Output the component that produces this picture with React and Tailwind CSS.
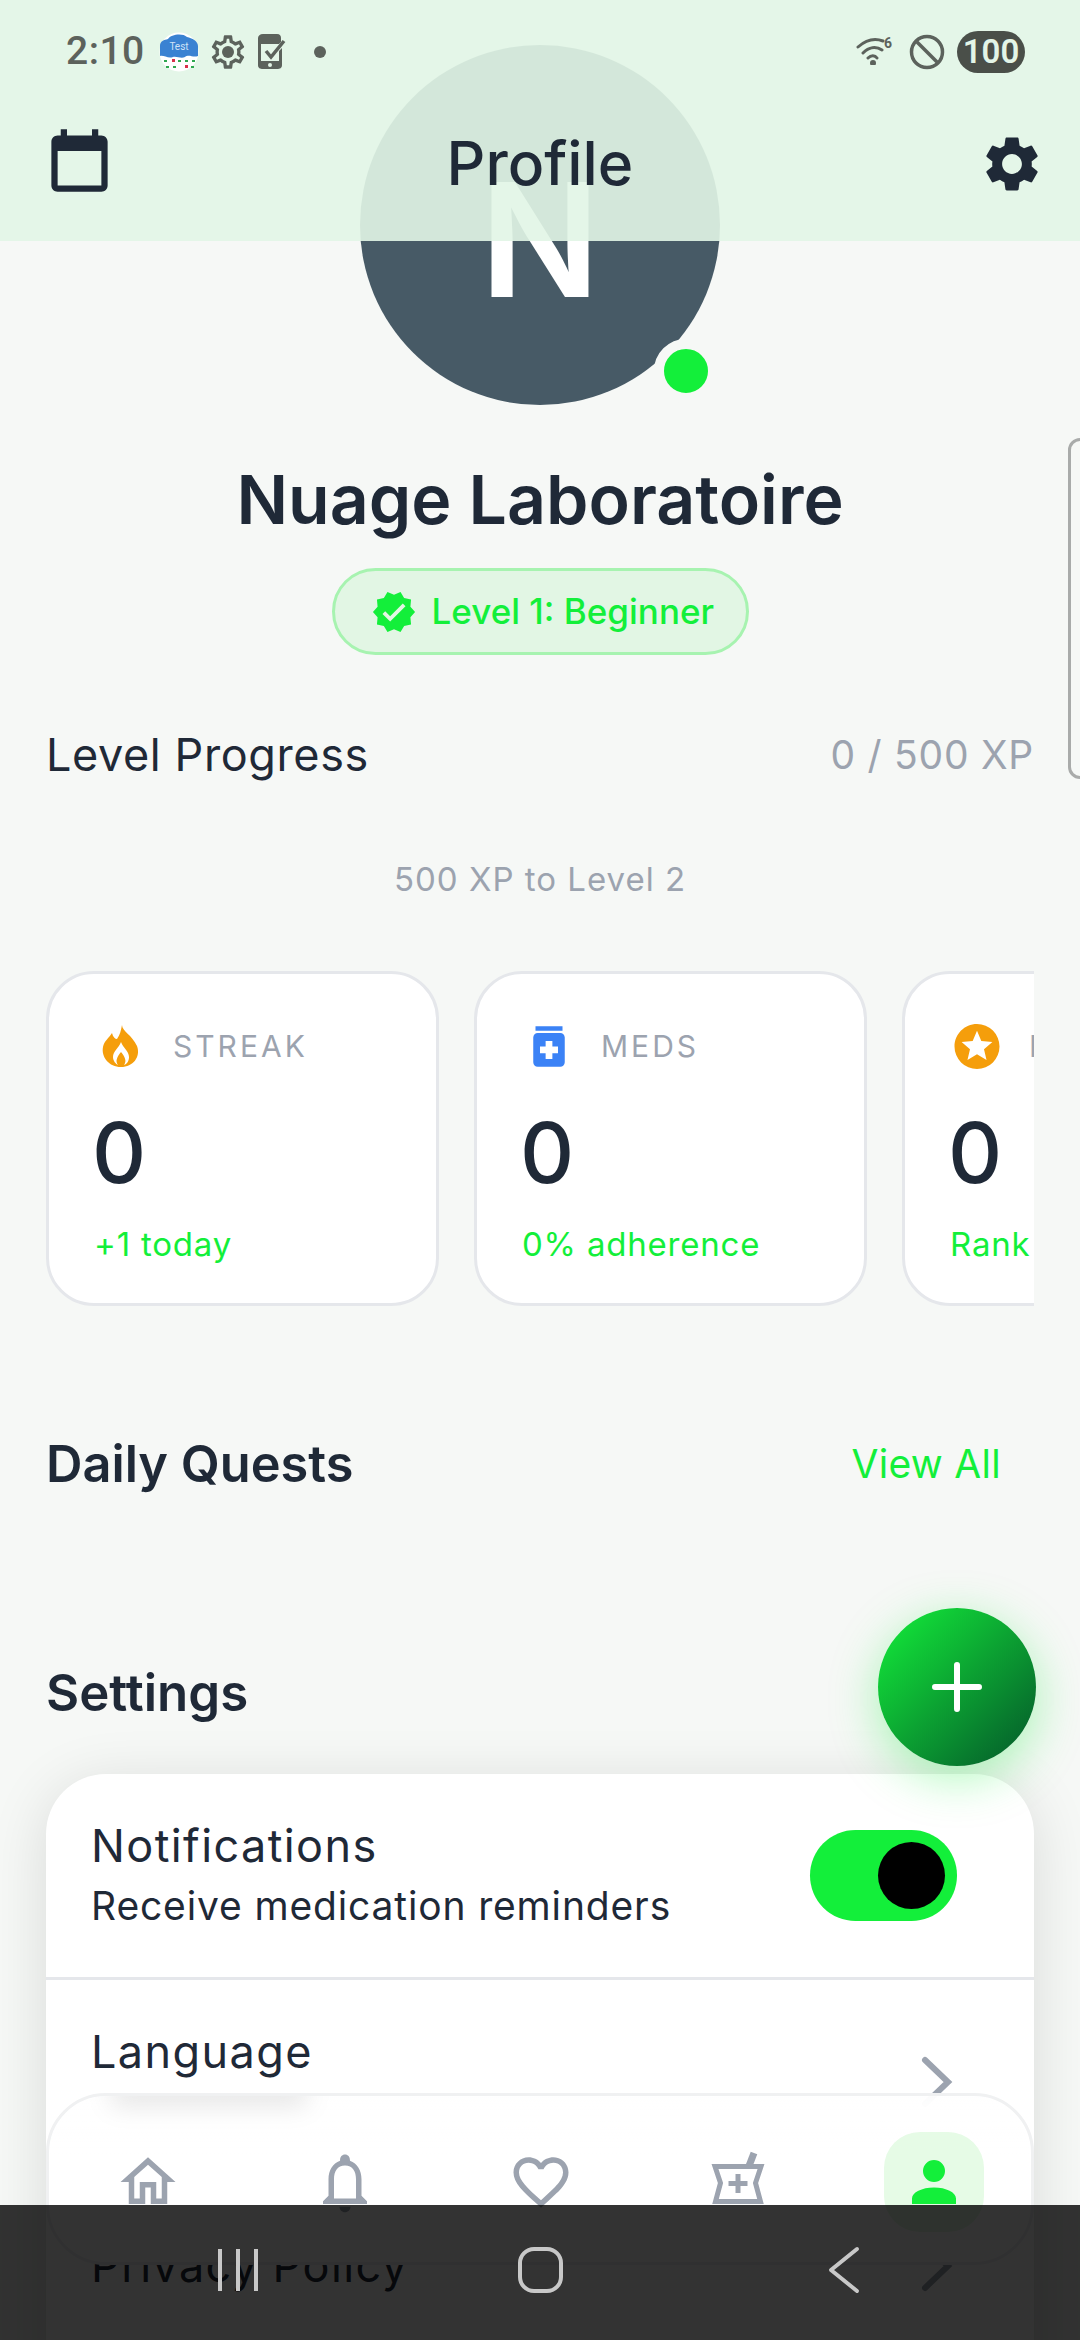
const G = '#13ef3a';
const Ic = ({ d, size = 66, color = '#9ca3af', className = '' }) => (
  <svg width={size} height={size} viewBox="0 0 24 24" fill={color} className={className}><path d={d} /></svg>
);
const home = 'M12 5.69L17 10.19V18H15V12H9V18H7V10.19L12 5.69M12 3L2 12H5V20H11V14H13V20H19V12H22L12 3Z';
const bell = 'M10 21H14C14 22.1 13.1 23 12 23S10 22.1 10 21M20 19V20H4V19L6 17V11C6 7.9 7.5 5.2 10.2 4.3V4C10.2 2.9 10.9 2 12 2S13.8 2.9 13.8 4V4.3C16.5 5.2 18 7.9 18 11V17L20 19M16 11C16 8.2 14.8 6 12 6S8 8.2 8 11V18H16V11Z';
const heart = 'M12.1,18.55L12,18.65L11.89,18.55C7.14,14.24 4,11.39 4,8.5C4,6.5 5.5,5 7.5,5C9.04,5 10.54,6 11.07,7.36H12.93C13.46,6 14.96,5 16.5,5C18.5,5 20,6.5 20,8.5C20,11.39 16.86,14.24 12.1,18.55M16.5,3C14.76,3 13.09,3.81 12,5.08C10.91,3.81 9.24,3 7.5,3C4.42,3 2,5.41 2,8.5C2,12.27 5.4,15.36 10.55,20.03L12,21.35L13.45,20.03C18.6,15.36 22,12.27 22,8.5C22,5.41 19.58,3 16.5,3Z';
const account = 'M12,4A4,4 0 0,1 16,8A4,4 0 0,1 12,12A4,4 0 0,1 8,8A4,4 0 0,1 12,4M12,14C16.42,14 20,15.79 20,18V20H4V18C4,15.79 7.58,14 12,14Z';
const calendar = 'M19 3H18V1H16V3H8V1H6V3H5C3.89 3 3 3.9 3 5V19C3 20.1 3.89 21 5 21H19C20.1 21 21 20.1 21 19V5C21 3.9 20.1 3 19 3M19 19H5V8H19V19Z';
const gear = 'M19.14 12.94c.04-.3.06-.61.06-.94 0-.32-.02-.64-.07-.94l2.03-1.58c.18-.14.23-.41.12-.61l-1.92-3.32c-.12-.22-.37-.29-.59-.22l-2.39.96c-.5-.38-1.03-.7-1.62-.94l-.36-2.54c-.04-.24-.24-.41-.48-.41h-3.84c-.24 0-.43.17-.47.41l-.36 2.54c-.59.24-1.13.57-1.62.94l-2.39-.96c-.22-.08-.47 0-.59.22L2.74 8.87c-.12.21-.08.47.12.61l2.03 1.58c-.05.3-.09.63-.09.94s.02.64.07.94l-2.03 1.58c-.18.14-.23.41-.12.61l1.92 3.32c.12.22.37.29.59.22l2.39-.96c.5.38 1.03.7 1.62.94l.36 2.54c.05.24.24.41.48.41h3.84c.24 0 .44-.17.47-.41l.36-2.54c.59-.24 1.13-.56 1.62-.94l2.39.96c.22.08.47 0 .59-.22l1.92-3.32c.12-.22.07-.47-.12-.61l-2.01-1.58zM12 15.6c-1.98 0-3.6-1.62-3.6-3.6s1.62-3.6 3.6-3.6 3.6 1.62 3.6 3.6-1.62 3.6-3.6 3.6z';
const gearOutline = 'M19.43 12.98c.04-.32.07-.64.07-.98 0-.34-.03-.66-.07-.98l2.11-1.65c.19-.15.24-.42.12-.64l-2-3.46c-.09-.16-.26-.25-.44-.25-.06 0-.12.01-.17.03l-2.49 1c-.52-.4-1.08-.73-1.69-.98l-.38-2.65C14.46 2.18 14.25 2 14 2h-4c-.25 0-.46.18-.49.42l-.38 2.65c-.61.25-1.17.59-1.69.98l-2.49-1c-.06-.02-.12-.03-.18-.03-.17 0-.34.09-.43.25l-2 3.46c-.13.22-.07.49.12.64l2.11 1.65c-.04.32-.07.65-.07.98 0 .33.03.66.07.98l-2.11 1.65c-.19.15-.24.42-.12.64l2 3.46c.09.16.26.25.44.25.06 0 .12-.01.17-.03l2.49-1c.52.4 1.08.73 1.69.98l.38 2.65c.03.24.24.42.49.42h4c.25 0 .46-.18.49-.42l.38-2.65c.61-.25 1.17-.59 1.69-.98l2.49 1c.06.02.12.03.18.03.17 0 .34-.09.43-.25l2-3.46c.12-.22.07-.49-.12-.64l-2.11-1.65zm-1.98-1.71c.04.31.05.52.05.73 0 .21-.02.43-.05.73l-.14 1.13.89.7 1.08.84-.7 1.21-1.27-.51-1.04-.42-.9.68c-.43.32-.84.56-1.25.73l-1.06.43-.16 1.13-.2 1.35h-1.4l-.19-1.35-.16-1.13-1.06-.43c-.43-.18-.83-.41-1.23-.71l-.91-.7-1.06.43-1.27.51-.7-1.21 1.08-.84.89-.7-.14-1.13c-.03-.31-.05-.54-.05-.74s.02-.43.05-.73l.14-1.13-.89-.7-1.08-.84.7-1.21 1.27.51 1.04.42.9-.68c.43-.32.84-.56 1.25-.73l1.06-.43.16-1.13.2-1.35h1.39l.19 1.35.16 1.13 1.06.43c.43.18.83.41 1.23.71l.91.7 1.06-.43 1.27-.51.7 1.21-1.07.85-.89.7.14 1.13z';
const decagram = 'M23,12L20.56,9.22L20.9,5.54L17.29,4.72L15.4,1.54L12,3L8.6,1.54L6.71,4.72L3.1,5.53L3.44,9.21L1,12L3.44,14.78L3.1,18.47L6.71,19.29L8.6,22.47L12,21L15.4,22.46L17.29,19.28L20.9,18.46L20.56,14.78L23,12M10,17L6,13L7.41,11.59L10,14.17L16.59,7.58L18,9L10,17Z';
const meds = 'M6 3h12v2H6V3zM17 6H7c-1.1 0-2 .9-2 2v11c0 1.1.9 2 2 2h10c1.1 0 2-.9 2-2V8c0-1.1-.9-2-2-2zm-1 9h-2.5v2.5h-3V15H8v-3h2.5V9.5h3V12H16v3z';
const starCircle = 'M16.23,18L12,15.45L7.77,18L8.89,13.19L5.16,9.96L10.08,9.54L12,5L13.92,9.53L18.84,9.95L15.11,13.18L16.23,18M12,2C6.47,2 2,6.5 2,12A10,10 0 0,0 12,22A10,10 0 0,0 22,12A10,10 0 0,0 12,2Z';

const Flame = () => (
  <svg width="54" height="54" viewBox="0 0 54 54" fill="#f59e0b">
    <path fillRule="evenodd" d="M28 6C28 12 38 16 43 27C47 38 39 48 27 48C15 48 7 38 9 28C10 22 15 19 18 14C19 18 21 20 23 20C26 16 27 11 28 6ZM27 23C25 29 19 32 19 38C19 42 22 45 24 46C21 42 23 38 27 33C31 38 33 42 30 46C33 45 35 42 35 38C35 32 29 29 27 23Z" />
  </svg>
);

const Mortar = () => (
  <svg width="66" height="66" viewBox="0 0 66 66" fill="none" stroke="#9ca3af" strokeWidth="5">
    <path d="M10 17.5H56L50.5 34L55.5 52.5H10.5L15.5 34Z" />
    <path d="M44 17L49 4" strokeWidth="7" />
    <path d="M33 25V44M23.5 34.5H42.5" />
  </svg>
);

const Chevron = () => (
  <svg width="36" height="54" viewBox="0 0 36 54" fill="none" stroke="#9ca3af" strokeWidth="6" strokeLinecap="round">
    <path d="M6 5L29 27L6 49" />
  </svg>
);

const TestCloud = () => (
  <svg width="40" height="40" viewBox="0 0 40 40">
    <circle cx="20" cy="20" r="19.5" fill="#fff" />
    <path d="M1 24V14C1 9 5 8 9 7C12 2 24 1 28 5C33 6 39 9 39 14V24C34 26 30 22 26 25C22 27 18 24 14 25C9 27 5 23 1 24Z" fill="#3a82d2" />
    <text x="20" y="18" textAnchor="middle" fontSize="10" fontFamily="Roboto, sans-serif" fill="#cfe2f7">Test</text>
    <g fill="#2fa84f">
      <rect x="5" y="28" width="3" height="2" /><rect x="19" y="28" width="3" height="2" /><rect x="26" y="28" width="3" height="2" /><rect x="33" y="28" width="3" height="2" />
      <rect x="7" y="34" width="3" height="2" /><rect x="14" y="34" width="3" height="2" /><rect x="32" y="34" width="3" height="2" />
    </g>
    <g fill="#d9304a">
      <rect x="13" y="27" width="3" height="3" /><rect x="26" y="33" width="3" height="3" />
    </g>
  </svg>
);

const StatusBar = () => (
  <div className="flex h-[103px] items-center justify-between pl-[66px] pr-[55px]">
    <div className="flex items-center">
      <span className="text-[39px] font-medium text-[#5c625c] tracking-[0.5px]" style={{ fontFamily: 'Roboto, sans-serif' }}>2:10</span>
      <span className="ml-[14px] flex"><TestCloud /></span>
      <span className="ml-[9px] flex">
        <svg width="40" height="40" viewBox="0 0 24 24" fill="#5c625c"><path d={gearOutline} /><circle cx="12" cy="12" r="3.6" /></svg>
      </span>
      <span className="ml-[10px] flex">
        <svg width="32" height="36" viewBox="0 0 32 36" fill="none">
          <path d="M5 0H19C22 0 23 2 23 4V8L21 10H3V27H21V17L24 14V31C24 34 22 35 19 35H5C2 35 0 34 0 31V4C0 2 2 0 5 0Z" fill="#5c625c" />
          <circle cx="12" cy="31" r="2" fill="#e3f5e7" />
          <path d="M8 17L13 23L26 7" stroke="#5c625c" strokeWidth="3.5" />
        </svg>
      </span>
      <span className="ml-[24px] size-[12px] rounded-full bg-[#5c625c]" />
    </div>
    <div className="flex items-center">
      <svg width="38" height="30" viewBox="0 0 38 30" fill="none" stroke="#5c625c" strokeWidth="3" strokeLinecap="round" className="mt-[-4px]">
        <path d="M2 12C11 4 19 3 27 6M7 18C13 12 20 11 26 15M12 23C15 20 19 20 21 23" />
        <circle cx="17" cy="28" r="1.5" fill="#5c625c" />
        <text x="28" y="13" fontSize="14" fontWeight="700" fontFamily="Roboto, sans-serif" fill="#5c625c" stroke="none">6</text>
      </svg>
      <svg width="36" height="36" viewBox="0 0 36 36" fill="none" stroke="#5c625c" strokeWidth="3.5" className="ml-[15px]">
        <circle cx="18" cy="18" r="15.5" /><path d="M7 7L29 29" />
      </svg>
      <span className="ml-[12px] flex h-[42px] w-[68px] items-center justify-center rounded-full bg-[#4a4f49] text-[33px] font-semibold text-[#e3f5e7]" style={{ fontFamily: 'Roboto, sans-serif' }}>100</span>
    </div>
  </div>
);

const Stat = ({ icon, label, value, sub }) => (
  <div className="flex h-[335px] w-[393px] shrink-0 flex-col rounded-[48px] border-[3px] border-[#e5e7eb] bg-white pl-[45px] pt-[45px]">
    <div className="flex h-[54px] items-center">
      <span className="flex w-[54px] justify-center">{icon}</span>
      <span className="ml-[25px] text-[30px] tracking-[3px] text-[#9ca3af]">{label}</span>
    </div>
    <div className="mt-[25px] ml-[-2px] text-[84px] font-medium leading-[110px] text-[#1f2937]">{value}</div>
    <div className="mt-[12px] text-[33px] tracking-[0.8px] whitespace-nowrap text-[#13ef3a]">{sub}</div>
  </div>
);

const Row = ({ title, sub, spaced, h, right, border = true }) => (
  <div className={`flex items-center justify-between pl-[45px] pr-[79px] ${h} ${border ? 'border-b-[3px] border-[#e5e7eb]' : ''}`}>
    <div>
      <div className="text-[45px] leading-[60px] tracking-[1.4px] text-[#1f2937]">{title}</div>
      {sub && <div className="text-[39px] leading-[60px] tracking-[0.85px] text-[#1f2937]">{sub}</div>}
      {spaced && <div className="h-[60px]" />}
    </div>
    {right}
  </div>
);

export default function App() {
  return (
    <div className="relative h-[2340px] w-[1080px] overflow-hidden bg-[#f6f8f6]" style={{ fontFamily: 'Inter, sans-serif' }}>
      {/* scrolled content */}
      <div className="flex flex-col px-[46px] pt-[45px]">
        <div className="relative flex size-[360px] items-center justify-center self-center rounded-full bg-[#475a66]">
          <span className="mt-[30px] text-[158px] font-semibold leading-none text-white">N</span>
          <span className="absolute left-[294px] top-[294px] size-[64px] rounded-full border-[10px] border-[#f6f8f6] bg-[#13ef3a]" />
        </div>
        <h1 className="mt-[46px] text-center text-[68px] font-semibold leading-[96px] text-[#1f2937]">Nuage Laboratoire</h1>
        <div className="mt-[21px] flex h-[87px] w-[417px] items-center self-center rounded-full border-[3px] border-[#a7f3b0] bg-[#e2f6e4] pl-[36px]">
          <Ic d={decagram} size={46} color={G} />
          <span className="ml-[15px] text-[35px] font-medium text-[#13ef3a]">Level 1: Beginner</span>
        </div>
        <div className="mt-[70px] flex items-center justify-between">
          <span className="text-[45px] leading-[60px] tracking-[0.6px] text-[#1f2937]">Level Progress</span>
          <span className="text-[39px] tracking-[0.75px] text-[#9ca3af]">0 / 500 XP</span>
        </div>
        <div className="mt-[70px] text-center text-[33px] leading-[48px] tracking-[1px] text-[#9ca3af]">500 XP to Level 2</div>
        <div className="mt-[68px] flex gap-[35px] overflow-hidden">
          <Stat icon={<Flame />} label="STREAK" value="0" sub="+1 today" />
          <Stat icon={<Ic d={meds} size={57} color="#3b82f6" />} label="MEDS" value="0" sub="0% adherence" />
          <Stat icon={<Ic d={starCircle} size={55} color="#f59e0b" />} label="POINTS" value="0" sub="Rank #1" />
        </div>
        <div className="mt-[122px] flex items-center justify-between pr-[33px]">
          <span className="text-[50.5px] font-semibold leading-[72px] text-[#1f2937]">Daily Quests</span>
          <span className="text-[39px] tracking-[0.3px] text-[#13ef3a]">View All</span>
        </div>
        <div className="mt-[157px] text-[51px] font-semibold leading-[72px] text-[#1f2937]">Settings</div>
        <div className="mt-[45px] overflow-hidden rounded-[60px] bg-white shadow-[0_10px_60px_rgba(0,0,0,0.12)]">
          <Row
            h="h-[206px]"
            title="Notifications"
            sub="Receive medication reminders"
            right={
              <div className="mr-[-2px] flex h-[91px] w-[147px] items-center justify-end rounded-full bg-[#13ef3a] pr-[12px]">
                <span className="size-[67px] rounded-full bg-black" />
              </div>
            }
          />
          <Row h="h-[206px]" title="Language" spaced right={<Chevron />} />
          <Row h="h-[160px]" title="Privacy Policy" border={false} right={<Chevron />} />
          <div className="h-[200px]" />
        </div>
      </div>

      {/* fixed header */}
      <header className="absolute inset-x-0 top-0 h-[241px] bg-[rgba(225,245,230,0.91)]">
        <StatusBar />
        <div className="mt-[23px] grid grid-cols-3 items-center px-[42px]">
          <Ic d={calendar} size={75} color="#1f2937" />
          <span className="justify-self-center text-[60.5px] font-medium leading-[75px] text-[#1f2937]">Profile</span>
          <Ic d={gear} size={66} color="#1f2937" className="justify-self-end mr-[-7px]" />
        </div>
      </header>

      {/* side handle */}
      <div className="absolute right-[-12px] top-[438px] h-[341px] w-[24px] rounded-l-[12px] border-[3px] border-[#a9abaa]" />

      {/* add button */}
      <button className="absolute left-[878px] top-[1608px] flex size-[158px] items-center justify-center rounded-full bg-[linear-gradient(135deg,#13ef3a,#04552a)] shadow-[0_12px_48px_rgba(19,239,58,0.35)]">
        <svg width="50" height="50" viewBox="0 0 50 50" stroke="#fff" strokeWidth="6" strokeLinecap="round"><path d="M25 3V47M3 25H47" /></svg>
      </button>

      {/* bottom tabs */}
      <nav className="absolute left-[46px] top-[2093px] flex h-[172px] w-[988px] items-center justify-between overflow-hidden rounded-[60px] border-[3px] border-[#f0f1f2] bg-[linear-gradient(to_bottom,rgba(255,255,255,0.92),#ffffff_35%)] pl-[49px] pr-[47px] pt-[6px] backdrop-blur-2xl">
        <span className="absolute left-[60px] top-[-14px] h-[24px] w-[200px] rounded-full bg-black/10 blur-md" />
        <span className="flex size-[100px] items-center justify-center"><Ic d={home} /></span>
        <span className="flex size-[100px] items-center justify-center"><Ic d={bell} /></span>
        <span className="flex size-[100px] items-center justify-center"><Ic d={heart} /></span>
        <span className="flex size-[100px] items-center justify-center"><Mortar /></span>
        <span className="flex size-[100px] items-center justify-center rounded-[36px] bg-[#e6fbe6]"><Ic d={account} color={G} /></span>
      </nav>

      {/* system navigation */}
      <div className="absolute inset-x-0 bottom-0 h-[135px] bg-black/80">
        <svg width="1080" height="135" viewBox="0 0 1080 135" fill="none" stroke="#c8c8c8" strokeWidth="4">
          <path d="M220 44V86M238 44V86M256 44V86" />
          <rect x="520" y="44" width="41" height="42" rx="14" />
          <path d="M857 44L831 65L857 86" strokeLinecap="round" strokeLinejoin="round" />
        </svg>
      </div>
    </div>
  );
}
